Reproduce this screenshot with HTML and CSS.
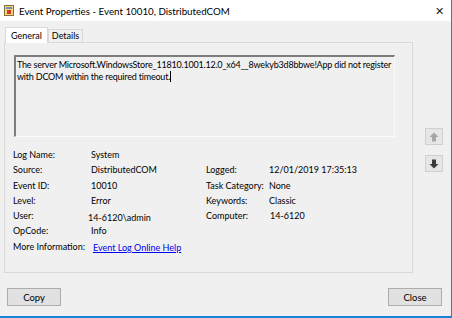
FILE: index.html
```html
<!DOCTYPE html>
<html lang="en">
<head>
    <meta charset="UTF-8">
    <title>Event Properties</title>
    <link rel="stylesheet" href="styles.css">
</head>
<body>
    <div class="window">
        <div class="titlebar">
            <svg class="app-icon" width="10" height="11" viewBox="0 0 10 11">
                <rect x="0.5" y="0.5" width="9" height="10" fill="#f3d27a" stroke="#8a6d3b"/>
                <rect x="2" y="2" width="6" height="2" fill="#6b8fc7"/>
                <rect x="3" y="5" width="4" height="4" fill="#d23a2a"/>
            </svg>
            <span class="title">Event Properties - Event 10010, DistributedCOM</span>
            <span class="close">&#x2715;</span>
        </div>

        <div class="body">
            <div class="main">
                <div class="tabs">
                    <div class="tab active">General</div>
                    <div class="tab">Details</div>
                </div>
                <div class="panel">
                    <div class="message">The server Microsoft.WindowsStore_11810.1001.12.0_x64__8wekyb3d8bbwe!App did not register<br>with DCOM within the required timeout.<span class="caret"></span></div>

                    <div class="fields">
                        <span>Log Name:</span><span>System</span><span></span><span></span>
                        <span>Source:</span><span>DistributedCOM</span><span>Logged:</span><span>12/01/2019 17:35:13</span>
                        <span>Event ID:</span><span>10010</span><span>Task Category:</span><span>None</span>
                        <span>Level:</span><span>Error</span><span>Keywords:</span><span>Classic</span>
                        <span>User:</span><span class="user">14-6120\admin</span><span>Computer:</span><span class="computer">14-6120</span>
                        <span>OpCode:</span><span>Info</span><span></span><span></span>
                        <span>More Information:</span><a class="link" href="#">Event Log Online Help</a><span></span><span></span>
                    </div>
                </div>
            </div>

            <div class="side">
                <button class="nav-btn up">
                    <svg width="10" height="10" viewBox="0 0 10 10"><path d="M5 0.5 L9.5 5 L7 5 L7 9.5 L3 9.5 L3 5 L0.5 5 Z" fill="#a6a6a6"/></svg>
                </button>
                <button class="nav-btn down">
                    <svg width="10" height="10" viewBox="0 0 10 10"><path d="M3 0.5 L7 0.5 L7 5 L9.5 5 L5 9.5 L0.5 5 L3 5 Z" fill="#3c3c3c"/></svg>
                </button>
            </div>
        </div>

        <div class="footer">
            <button class="btn">Copy</button>
            <button class="btn">Close</button>
        </div>
    </div>
</body>
</html>
```

FILE: styles.css
```css
* {
    box-sizing: border-box;
}

body {
    margin: 0;
    font-family: Lato, 'Noto Sans', sans-serif;
    font-size: 9px;
    color: #000;
    background: #f0f0f0;
}

.window {
    width: 452px;
    height: 318px;
    background: #f0f0f0;
    border-right: 1px solid #1883d7;
    border-bottom: 2px solid #1883d7;
    display: flex;
    flex-direction: column;
}

.titlebar {
    height: 21px;
    background: #fff;
    display: flex;
    align-items: center;
    padding-left: 4px;
}

.app-icon {
    margin-right: 5px;
}

.title {
    font-size: 9.75px;
    flex: 1;
}

.close {
    font-size: 11px;
    color: #222;
    width: 14px;
    margin-right: 5px;
    text-align: center;
}

.body {
    display: flex;
    padding: 6px 0 0 4px;
}

.main {
    width: 409px;
    flex-shrink: 0;
}

.tabs {
    display: flex;
    padding-left: 1px;
    height: 15px;
    align-items: flex-end;
}

.tab {
    height: 13px;
    line-height: 12px;
    padding: 0 3px;
    border: 1px solid #d9d9d9;
    border-bottom: none;
    background: #f0f0f0;
}

.tab.active {
    height: 16px;
    line-height: 15px;
    padding: 0 5px;
    background: #fff;
    margin-bottom: -1px;
    position: relative;
    z-index: 1;
}

.panel {
    height: 231px;
    border: 1px solid #d9d9d9;
    background: #f0f0f0;
    padding: 12px 0 0 9px;
}

.message {
    width: 381px;
    height: 82px;
    border-top: 2px solid #7d7d7d;
    border-left: 2px solid #7d7d7d;
    border-right: 1px solid #fbfbfb;
    border-bottom: 1px solid #fbfbfb;
    padding: 2px 0 0 1px;
    line-height: 12px;
    letter-spacing: -0.2px;
    white-space: nowrap;
    overflow: hidden;
}

.caret {
    display: inline-block;
    width: 1px;
    height: 11px;
    background: #000;
    vertical-align: -2px;
}

.fields {
    display: grid;
    grid-template-columns: 78px 115px 63px 1fr;
    grid-auto-rows: 15.3px;
    line-height: 15.3px;
    margin-top: 10px;
    margin-left: -1px;
    white-space: nowrap;
}

.user {
    margin-left: -3px;
    padding-top: 2px;
}

.computer {
    margin-left: 1px;
}

.link {
    color: #0000ee;
    margin-left: 2px;
    padding-top: 1px;
}

.side {
    display: flex;
    flex-direction: column;
    gap: 10px;
    padding: 101px 0 0 12px;
}

.nav-btn {
    width: 18px;
    height: 17px;
    padding: 0;
    border: 1px solid #cfcfcf;
    background: #e6e6e6;
    display: flex;
    align-items: center;
    justify-content: center;
}

.footer {
    display: flex;
    justify-content: space-between;
    padding: 15px 9px 0 7px;
}

.btn {
    width: 54px;
    height: 18px;
    padding: 0;
    border: 1px solid #adadad;
    background: #e1e1e1;
    font-family: Lato, 'Noto Sans', sans-serif;
    font-size: 9.5px;
    color: #000;
}
```
